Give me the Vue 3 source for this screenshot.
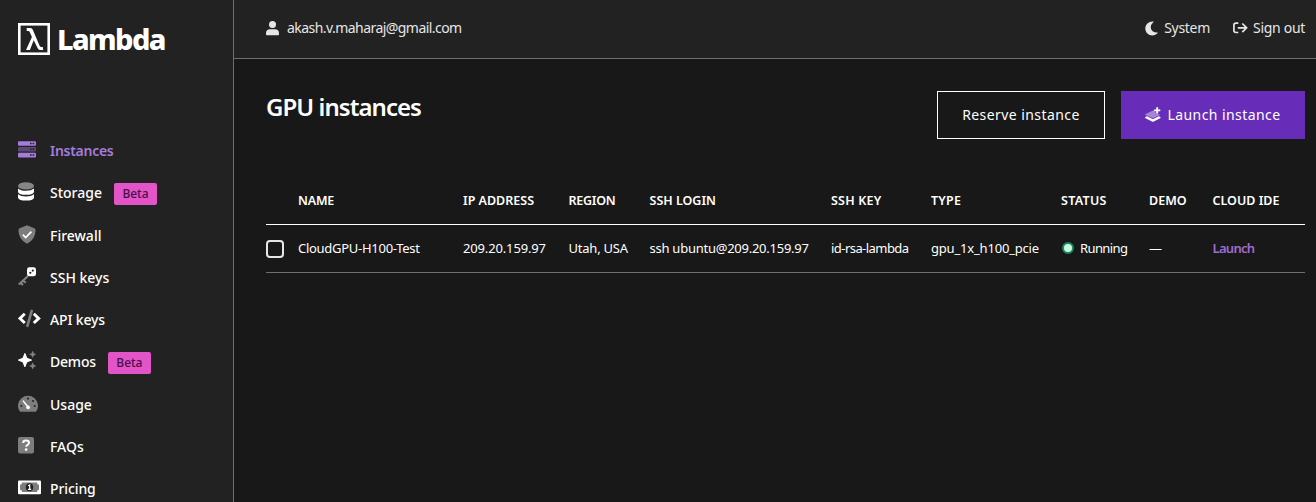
<script setup>
const nav = [
  { id: 'instances', label: 'Instances', active: true },
  { id: 'storage', label: 'Storage', beta: true },
  { id: 'firewall', label: 'Firewall' },
  { id: 'ssh', label: 'SSH keys' },
  { id: 'api', label: 'API keys' },
  { id: 'demos', label: 'Demos', beta: true },
  { id: 'usage', label: 'Usage' },
  { id: 'faqs', label: 'FAQs' },
  { id: 'pricing', label: 'Pricing' },
]
const columns = ['', 'NAME', 'IP ADDRESS', 'REGION', 'SSH LOGIN', 'SSH KEY', 'TYPE', 'STATUS', 'DEMO', 'CLOUD IDE']
</script>

<template>
  <div class="app">
    <aside class="sidebar">
      <div class="logo">
        <svg class="mark" width="32" height="32" viewBox="0 0 32 32">
          <rect x="1.300" y="1.300" width="29.400" height="29.400" fill="none" stroke="#fff" stroke-width="2.600" />
          <path d="M8.700 5.100h3.600q1.800 0 2.500 1.700l6.700 15.600q.7 1.700 1.700 1.700h1.600l.4 2.800h-3.300q-1.500 0-2.200-1.600L15.700 17.200 11.900 26.900H8l5.900-13-2.200-5q-.4-.9-1.300-.9H8.700z" fill="#fff" />
        </svg>
        <span class="wordmark">Lambda</span>
      </div>
      <nav class="nav">
        <a v-for="item in nav" :key="item.id" class="item" :class="[item.id, { active: item.active }]">
          <span class="icon">
            <svg v-if="item.id === 'instances'" width="18" height="17" viewBox="0 0 18 17">
              <rect y="0.200" width="18" height="4.600" rx="1" fill="#a57bdb" />
              <rect y="6" width="18" height="4.600" rx="1" fill="#5e4776" />
              <rect y="11.800" width="18" height="4.600" rx="1" fill="#a57bdb" />
              <path d="M12 2.500h1.600M14.600 2.500h1.600M12 14.100h1.600M14.600 14.100h1.600" stroke="#222" stroke-width="1.500" />
              <path d="M12 8.300h1.600M14.600 8.300h1.600" stroke="#222" stroke-width="1.500" />
            </svg>
            <svg v-else-if="item.id === 'storage'" width="16" height="19" viewBox="0 0 16 19">
              <ellipse cx="8" cy="3.900" rx="8" ry="3.700" fill="#858585" />
              <path d="M0 6.500q2.700 2.300 8 2.300t8-2.300v3.200q0 3.100-8 3.100T0 9.700z" fill="#fff" />
              <path d="M0 12.300q2.700 2.200 8 2.200t8-2.200v3.200q0 3.100-8 3.100t-8-3.100z" fill="#fff" />
            </svg>
            <svg v-else-if="item.id === 'firewall'" width="18" height="19" viewBox="0 0 18 19">
              <path d="M9 .3l7.400 3q1.100.5 1.100 1.700C17.400 11.200 14.600 16 9 18.700 3.400 16 .6 11.200.5 5q0-1.200 1.100-1.700z" fill="#7d7d7d" />
              <path d="M4.800 9.700l2.900 2.900 5.700-6" fill="none" stroke="#fff" stroke-width="1.700" />
            </svg>
            <svg v-else-if="item.id === 'ssh'" width="18" height="19" viewBox="0 0 18 19">
              <path d="M10 9L.8 17.500M2.300 16l2.800 1.800M4.800 13.700l3 1.900" fill="none" stroke="#858585" stroke-width="2" />
              <rect x="9" y="0.300" width="9" height="9" rx="2.400" fill="#fff" />
              <circle cx="14.800" cy="3.600" r="1.100" fill="#222" />
              <circle cx="12.300" cy="5.800" r="1.100" fill="#222" />
            </svg>
            <svg v-else-if="item.id === 'api'" width="23" height="19" viewBox="0 0 23 19">
              <path d="M14 .9L9.100 17.900" stroke="#7d7d7d" stroke-width="2.600" />
              <path d="M6.800 4.800L1.900 9.400l4.900 4.600M15.800 4.800l4.900 4.600-4.900 4.600" fill="none" stroke="#fff" stroke-width="2.900" />
            </svg>
            <svg v-else-if="item.id === 'demos'" width="18" height="19" viewBox="0 0 18 19">
              <path d="M6.900 2.400l1.900 4.800 4.800 1.900-4.800 1.900-1.900 4.800L5 11 .4 9.100 5 7.200z" fill="#fff" stroke="#fff" stroke-width="1" stroke-linejoin="round" />
              <path d="M14.700.1l1 2.300 2.200.9-2.200 1-1 2.200-1-2.200-2.200-1 2.200-.9zM14.700 11.700l1 2.300 2.200.9-2.200 1-1 2.200-1-2.200-2.200-1 2.200-.9z" fill="#858585" stroke="#858585" stroke-width=".4" />
            </svg>
            <svg v-else-if="item.id === 'usage'" width="20" height="17" viewBox="0 0 20 17">
              <path d="M1.700 16.300A10 10 0 1 1 18.300 16.300q-.4.500-1 .5H2.700q-.6 0-1-.5z" fill="#7d7d7d" />
              <g fill="#292929"><circle cx="10" cy="3.600" r="1.100" /><circle cx="15" cy="6" r="1.100" /><circle cx="3.300" cy="11" r="1.100" /><circle cx="16.700" cy="11" r="1.100" /></g>
              <path d="M4.900 5.600l5 6.200" stroke="#fff" stroke-width="1.500" />
              <circle cx="10.100" cy="12.300" r="1.900" fill="#fff" />
            </svg>
            <svg v-else-if="item.id === 'faqs'" width="16" height="17" viewBox="0 0 16 17">
              <rect width="16" height="16.400" rx="2" fill="#7d7d7d" />
              <path d="M5.200 5.900q0-2.300 2.800-2.300 3 0 3 2.200 0 1.200-1.500 2.100-1.300.8-1.300 1.800" fill="none" stroke="#fff" stroke-width="2" />
              <circle cx="8.100" cy="12.600" r="1.300" fill="#fff" />
            </svg>
            <svg v-else width="23" height="15" viewBox="0 0 23 15">
              <rect x="0" y="0.400" width="23" height="13.800" rx="1" fill="#fff" />
              <path d="M4 2.500h15q0 2.300 2 2.300v5q-2 0-2 2.300H4q0-2.300-2-2.300v-5q2 0 2-2.300z" fill="#7d7d7d" />
              <ellipse cx="11.500" cy="7.300" rx="3.700" ry="4" fill="#222" />
              <path d="M10 5.800l1.700-.8v4.200M10 9.300h3.200" fill="none" stroke="#fff" stroke-width="1.200" />
            </svg>
          </span>
          <span class="label">{{ item.label }}</span>
          <span v-if="item.beta" class="beta">Beta</span>
        </a>
      </nav>
    </aside>

    <section class="content">
      <header class="topbar">
        <div class="account">
          <svg width="13" height="15" viewBox="0 0 13 15" fill="#e6e6e6">
            <circle cx="6.500" cy="3.600" r="3.500" />
            <path d="M0 12.500Q0 8.300 4.200 8.300h4.600q4.200 0 4.200 4.200v.8q0 .9-.9.9H.9q-.9 0-.9-.9z" />
          </svg>
          <span class="email">akash.v.maharaj@gmail.com</span>
        </div>
        <div class="theme">
          <svg width="13" height="15" viewBox="0 0 13 15">
            <path d="M8.300.5C4 .1.300 3.200.300 7.300c0 4.300 3.300 7.200 7 7.200 2.100 0 4-.8 5.400-2.400q.3-.5-.3-.5C5.800 12 3.500 4.700 8.400 1.200q.5-.5-.1-.7z" fill="#e6e6e6" />
          </svg>
          <span class="system">System</span>
        </div>
        <div class="signout">
          <svg width="15" height="12" viewBox="0 0 15 12" fill="none" stroke="#e6e6e6" stroke-width="1.700">
            <path d="M5.300 1.100H3Q.900 1.100.900 3v5.600q0 1.900 2.100 1.900h2.300M4.800 5.800h8.400M9.300 1.500l4.300 4.300-4.300 4.300" />
          </svg>
          <span class="out">Sign out</span>
        </div>
      </header>

      <main class="main">
        <div class="heading">
          <h1>GPU instances</h1>
          <div class="actions">
            <button class="btn reserve"><span>Reserve instance</span></button>
            <button class="btn launch">
              <svg width="16" height="16" viewBox="0 0 16 16">
                <path d="M6.500 4.200L.600 7.100q-.8.500 0 .9l6.500 3q.8.300 1.600 0l5.900-2.700q.8-.5 0-.9L11.500 6.500 8.500 3.300z" fill="#a585d6" />
                <path d="M.300 9.900L2 9.200l5 2.500q.9.400 1.800 0l5-2.500 1.400.7q.9.700 0 1.300l-6.400 3.300q-.9.400-1.800 0L.600 11.200q-1-.6-.3-1.300z" fill="#fff" />
                <path d="M12.200.300v6.200M9.100 3.400h6.200" stroke="#fff" stroke-width="1.900" />
              </svg>
              <span>Launch instance</span>
            </button>
          </div>
        </div>

        <div class="table">
          <div class="row head">
            <span v-for="(c, i) in columns" :key="i" :class="'h' + i">{{ c }}</span>
          </div>
          <div class="row body">
            <span class="check"></span>
            <span class="c1">CloudGPU-H100-Test</span>
            <span class="c2">209.20.159.97</span>
            <span class="c3">Utah, USA</span>
            <span class="c4">ssh ubuntu@209.20.159.97</span>
            <span class="c5">id-rsa-lambda</span>
            <span class="c6">gpu_1x_h100_pcie</span>
            <span class="status"><i class="dot"></i><span class="c7">Running</span></span>
            <span class="c8">—</span>
            <span class="c9">Launch</span>
          </div>
        </div>
      </main>
    </section>
  </div>
</template>

<style>
body { margin: 0; background: #181818; overflow: hidden; }
</style>

<style scoped>
.app { display: flex; width: 1316px; height: 502px; overflow: hidden; background: #181818; color: #fff; font-family: "Noto Sans", "Open Sans", sans-serif; font-size: 14px; line-height: 20px; }
.app * { box-sizing: border-box; }
.app span { white-space: nowrap; }
.sidebar { width: 234px; flex: none; background: #222; border-right: 1px solid #6f6f6f; overflow: hidden; }
.logo { display: flex; align-items: center; height: 32px; margin: 23px 0 0 18px; }
.mark { flex: none; }
.wordmark { margin-left: 7px; font-size: 29px; line-height: 32px; font-weight: 800; letter-spacing: -1.6px; }
.nav { display: flex; flex-direction: column; margin-top: 75px; }
.item { display: flex; align-items: center; height: 42.250px; flex: none; padding-left: 18px; }
.icon { width: 32px; height: 20px; display: flex; align-items: center; margin-top: -3px; }
.label { font-size: 14px; font-weight: 500; }
.active { color: #a57bdb; }
.active .label { font-weight: 600; letter-spacing: -0.28px; }
.api .label { letter-spacing: -0.15px; }
.demos .label { letter-spacing: -0.2px; }
.pricing .label { letter-spacing: -0.1px; }
.beta { margin-left: 12px; margin-top: 2px; width: 43px; height: 22px; border-radius: 2px; background: #e254c8; color: #4b0d48; font-size: 12px; line-height: 22px; text-align: center; font-weight: 500; }
.topbar { height: 59px; display: flex; align-items: center; background: #222; border-bottom: 1px solid #6f6f6f; padding: 0 11px 2px 32px; color: #e6e6e6; }
.content { flex: 1; min-width: 0; }
.account, .theme, .signout { display: flex; align-items: center; }
.account { margin-right: auto; }
.email { margin-left: 8px; letter-spacing: -0.55px; }
.system { margin-left: 6px; letter-spacing: -0.3px; }
.signout { margin-left: 23px; }
.out { margin-left: 5px; letter-spacing: -0.3px; }
.main { padding: 32px 11px 0 32px; }
.heading { display: flex; justify-content: space-between; height: 48px; }
h1 { margin: 0; font-size: 24px; line-height: 32px; font-weight: 600; letter-spacing: -0.95px; white-space: nowrap; }
.actions { display: flex; gap: 16px; }
.btn { display: flex; align-items: center; justify-content: center; height: 48px; padding: 0; border: 0; background: transparent; color: #fff; font-family: inherit; font-size: 14px; line-height: 20px; font-weight: 450; letter-spacing: .43px; }
.reserve { width: 168px; border: 1px solid #fff; }
.launch { width: 184px; background: #672db8; gap: 6px; }
.table { margin-top: 37px; font-size: 13px; }
.row { display: grid; grid-template-columns: 32px 165px 105.500px 81px 181.500px 100px 130px 88px 63.500px 1fr; align-items: center; height: 48px; }
.head { height: 49px; padding-top: 2px; border-bottom: 1px solid #fff; font-weight: 600; font-size: 12.500px; }
.h1 { letter-spacing: -0.2px; }
.h3 { letter-spacing: -0.25px; }
.h7 { letter-spacing: .3px; }
.h5, .h6 { letter-spacing: .2px; }
.body { border-bottom: 1px solid #6f6f6f; }
.body > span:not(.check) { margin-top: -2px; }
.check { width: 18px; height: 18px; border: 2px solid #e6e6e6; border-radius: 4px; }
.status { display: flex; align-items: center; }
.dot { width: 12px; height: 12px; border-radius: 50%; border: 2px solid #16885c; background: #c8fae0; margin: 0 6px 0 1px; }
.c1 { letter-spacing: -0.28px; }
.c2 { letter-spacing: -0.15px; }
.c3 { letter-spacing: -0.22px; }
.c4 { letter-spacing: -0.25px; }
.c5 { letter-spacing: -0.55px; }
.c6 { letter-spacing: -0.19px; }
.c7 { letter-spacing: -0.6px; }
.c9 { color: #a06bd0; font-weight: 600; letter-spacing: -0.7px; }
</style>
